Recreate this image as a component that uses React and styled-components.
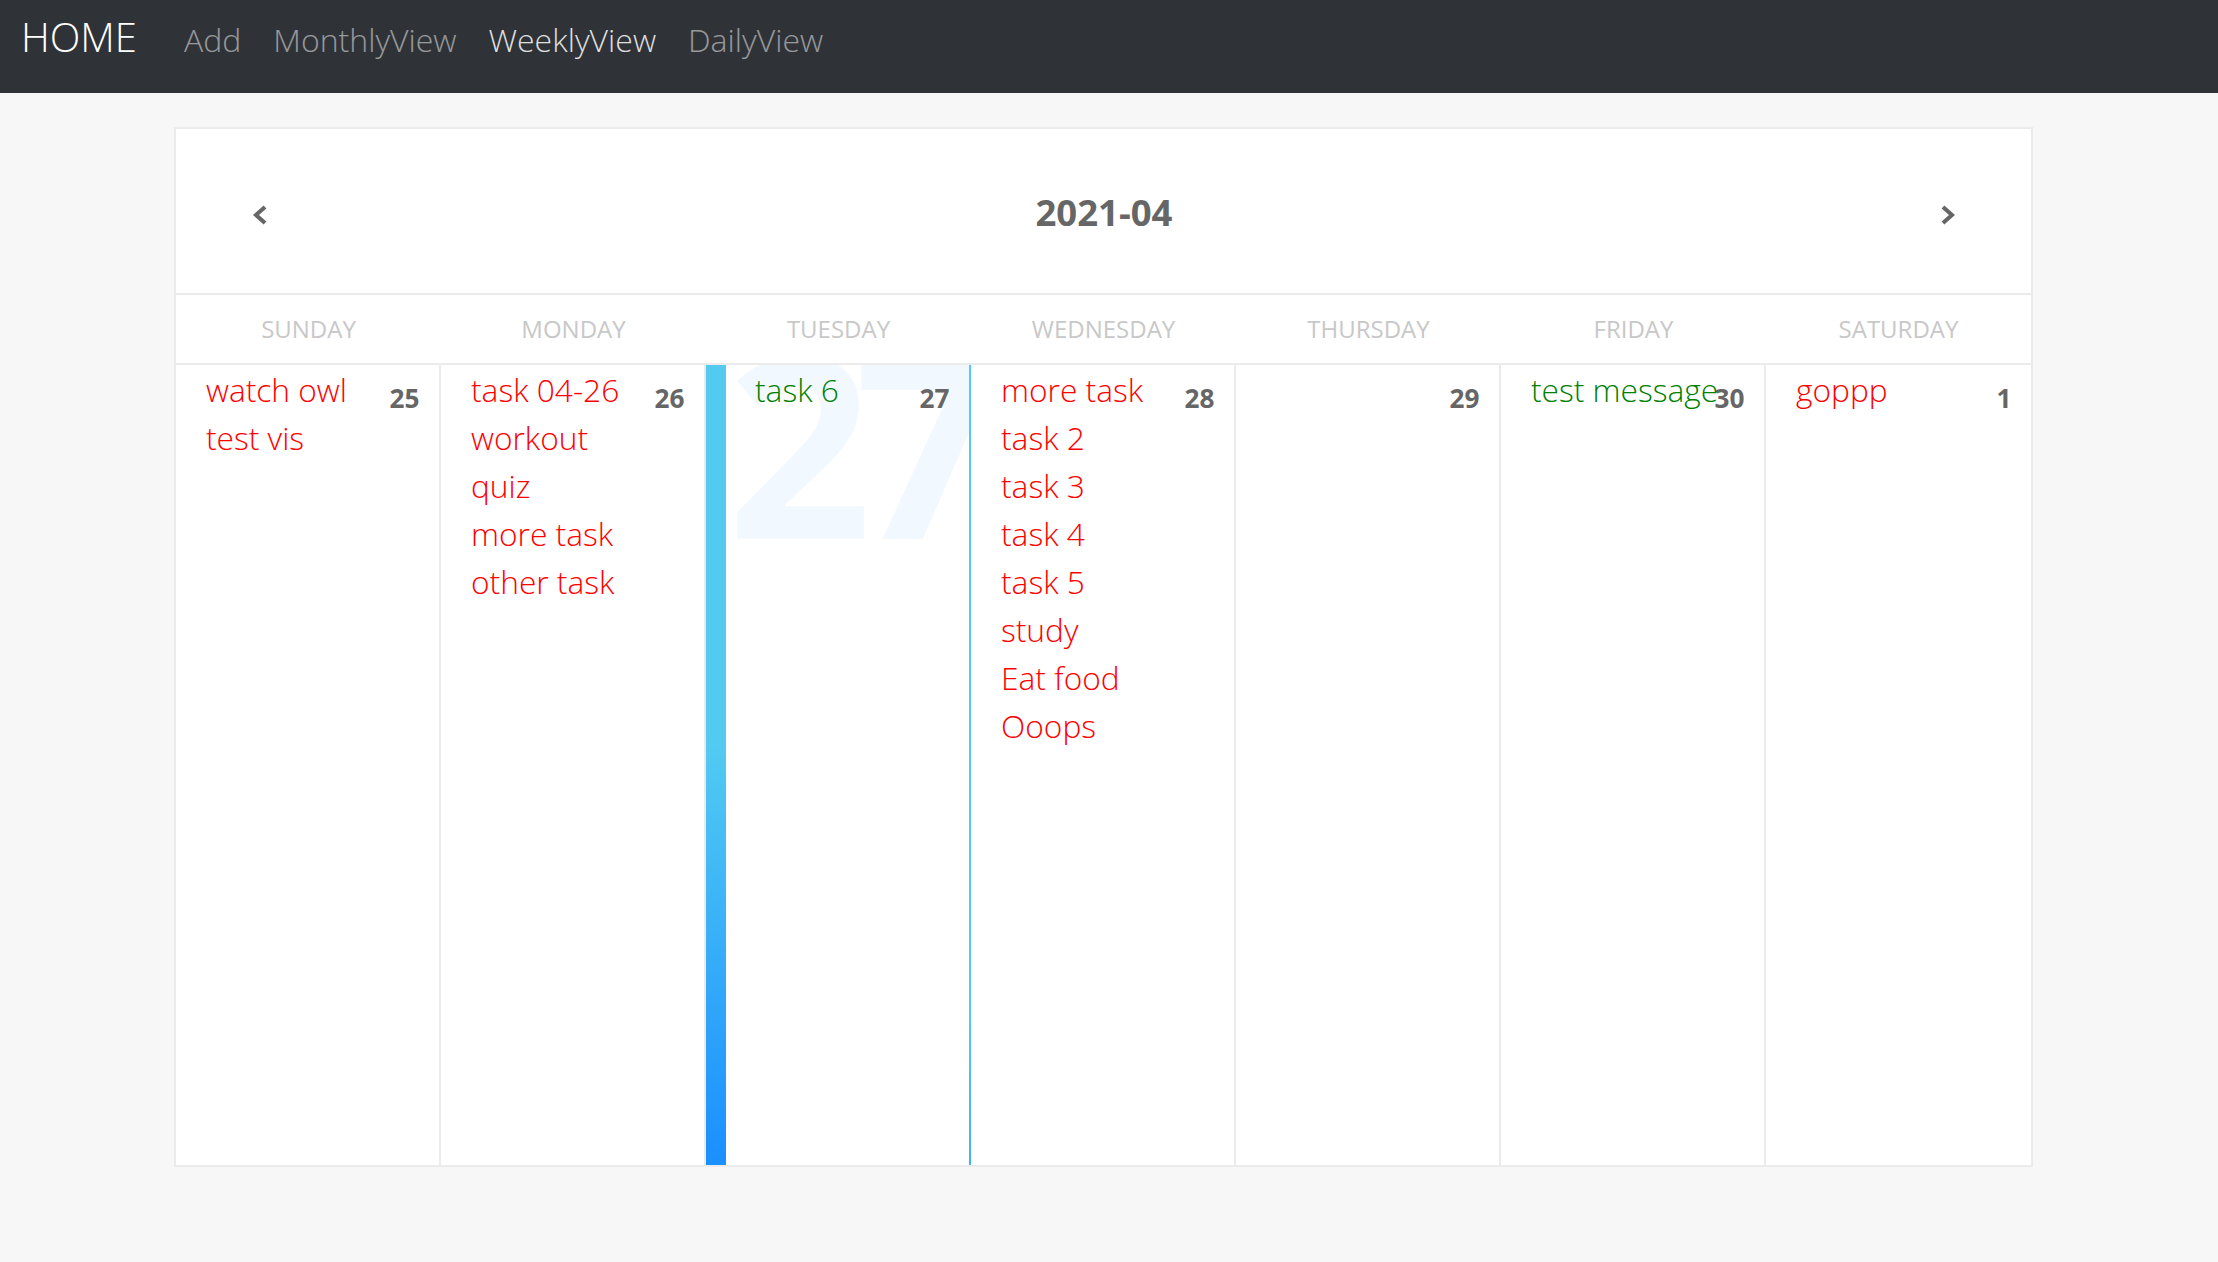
import React from "react";
import styled, { createGlobalStyle, css } from "styled-components";

const GlobalStyle = createGlobalStyle`
  html, body { margin: 0; padding: 0; }
  body {
    font-family: "Open Sans", "Noto Sans", "Liberation Sans", sans-serif;
    font-weight: 300;
    font-size: 31.7px;
    line-height: 1.5;
    color: #777;
    background: #f7f7f7;
    min-height: 1262px;
  }
  * { box-sizing: border-box; }
`;

const Nav = styled.nav`
  height: 93px;
  background: #2f3338;
  display: flex;
  align-items: baseline;
  padding: 7px 0 0 21px;
`;

const Brand = styled.a`
  font-size: 40px;
  font-weight: 300;
  line-height: 1.5;
  color: #fff;
  margin-right: 47px;
  text-decoration: none;
`;

const NavLinks = styled.div`
  display: flex;
  align-items: baseline;
  gap: 32px;
`;

const NavLink = styled.a`
  font-size: 32px;
  font-weight: 300;
  line-height: 1.5;
  text-decoration: none;
  color: ${(p) => (p.$active ? "rgba(255,255,255,0.85)" : "rgba(255,255,255,0.5)")};
`;

const Calendar = styled.section`
  width: 1859px;
  margin: 34px 0 0 174px;
  background: #fff;
  border: 2px solid #ebebeb;
`;

const Header = styled.header`
  display: flex;
  align-items: center;
  padding: 54.7px 0;
  font-size: 36.5px;
  font-weight: 700;
  line-height: 1.5;
  color: #666;
  border-bottom: 2px solid #ebebeb;
`;

const HeaderCol = styled.div`
  flex: 1;
  display: flex;
  justify-content: ${(p) => p.$align};
  ${(p) => p.$align === "flex-start" && css`padding-left: 74px;`}
  ${(p) => p.$align === "flex-end" && css`padding-right: 73px;`}
`;

const Title = styled.span`
  position: relative;
  top: 1px;
`;

const IconButton = styled.span`
  display: flex;
  margin-top: 8px;
  cursor: pointer;
  color: #666;
`;

const Days = styled.div`
  display: grid;
  grid-template-columns: repeat(7, 1fr);
  border-bottom: 2px solid #ebebeb;
`;

const DayName = styled.div`
  text-align: center;
  text-transform: uppercase;
  font-weight: 400;
  font-size: 24px;
  line-height: 36px;
  padding: 16px 0;
  color: #c8c8c8;
`;

const Week = styled.div`
  display: grid;
  grid-template-columns: repeat(7, 1fr);
`;

const Cell = styled.div`
  position: relative;
  height: 800px;
  overflow: hidden;
  padding: 1px 0 0 30px;
  background: #fff;
  border-right: 2px solid #ebebeb;
  &:last-child { border-right: none; }
  ${(p) =>
    p.$selected &&
    css`
      padding-left: 29px;
      border-left: 20px solid transparent;
      border-image: linear-gradient(45deg, #1a8fff 0%, #53cbf1 40%) 1;
    `}
`;

const DayNumber = styled.span`
  position: absolute;
  top: 19.6px;
  right: 19.6px;
  font-size: 26.2px;
  font-weight: 700;
  line-height: 1;
  color: #666;
`;

const BgNumber = styled.span`
  position: absolute;
  top: -0.2em;
  right: -0.05em;
  font-size: 253.6px;
  font-weight: 700;
  line-height: 1;
  letter-spacing: -0.07em;
  color: #1a8fff;
  opacity: 0.05;
  pointer-events: none;
`;

const TaskList = styled.ul`
  position: relative;
  list-style: none;
  margin: 0;
  padding: 0;
`;

const Task = styled.li`
  font-size: 31.7px;
  line-height: 48px;
  white-space: nowrap;
  color: ${(p) => (p.$done ? "green" : "red")};
`;

const ChevronLeft = () => (
  <svg width="18" height="22" viewBox="0 0 18 22" fill="none" stroke="currentColor" strokeWidth="4">
    <polyline points="15,3 6,11 15,19" />
  </svg>
);

const ChevronRight = () => (
  <svg width="18" height="22" viewBox="0 0 18 22" fill="none" stroke="currentColor" strokeWidth="4">
    <polyline points="3,3 12,11 3,19" />
  </svg>
);

const dayNames = ["Sunday", "Monday", "Tuesday", "Wednesday", "Thursday", "Friday", "Saturday"];

const week = [
  { n: 25, tasks: [["watch owl"], ["test vis"]] },
  { n: 26, tasks: [["task 04-26"], ["workout"], ["quiz"], ["more task"], ["other task"]] },
  { n: 27, selected: true, tasks: [["task 6", true]] },
  {
    n: 28,
    tasks: [["more task"], ["task 2"], ["task 3"], ["task 4"], ["task 5"], ["study"], ["Eat food"], ["Ooops"]],
  },
  { n: 29, tasks: [] },
  { n: 30, tasks: [["test message", true]] },
  { n: 1, tasks: [["goppp"]] },
];

export default function App() {
  return (
    <>
      <GlobalStyle />
      <Nav>
        <Brand href="#">HOME</Brand>
        <NavLinks>
          <NavLink href="#">Add</NavLink>
          <NavLink href="#">MonthlyView</NavLink>
          <NavLink href="#" $active>WeeklyView</NavLink>
          <NavLink href="#">DailyView</NavLink>
        </NavLinks>
      </Nav>
      <Calendar>
        <Header>
          <HeaderCol $align="flex-start">
            <IconButton><ChevronLeft /></IconButton>
          </HeaderCol>
          <HeaderCol $align="center">
            <Title>2021-04</Title>
          </HeaderCol>
          <HeaderCol $align="flex-end">
            <IconButton><ChevronRight /></IconButton>
          </HeaderCol>
        </Header>
        <Days>
          {dayNames.map((d) => (
            <DayName key={d}>{d}</DayName>
          ))}
        </Days>
        <Week>
          {week.map((d) => (
            <Cell key={d.n} $selected={d.selected}>
              {d.selected && <BgNumber>{d.n}</BgNumber>}
              <DayNumber>{d.n}</DayNumber>
              <TaskList>
                {d.tasks.map(([t, done], i) => (
                  <Task key={i} $done={done}>{t}</Task>
                ))}
              </TaskList>
            </Cell>
          ))}
        </Week>
      </Calendar>
    </>
  );
}
